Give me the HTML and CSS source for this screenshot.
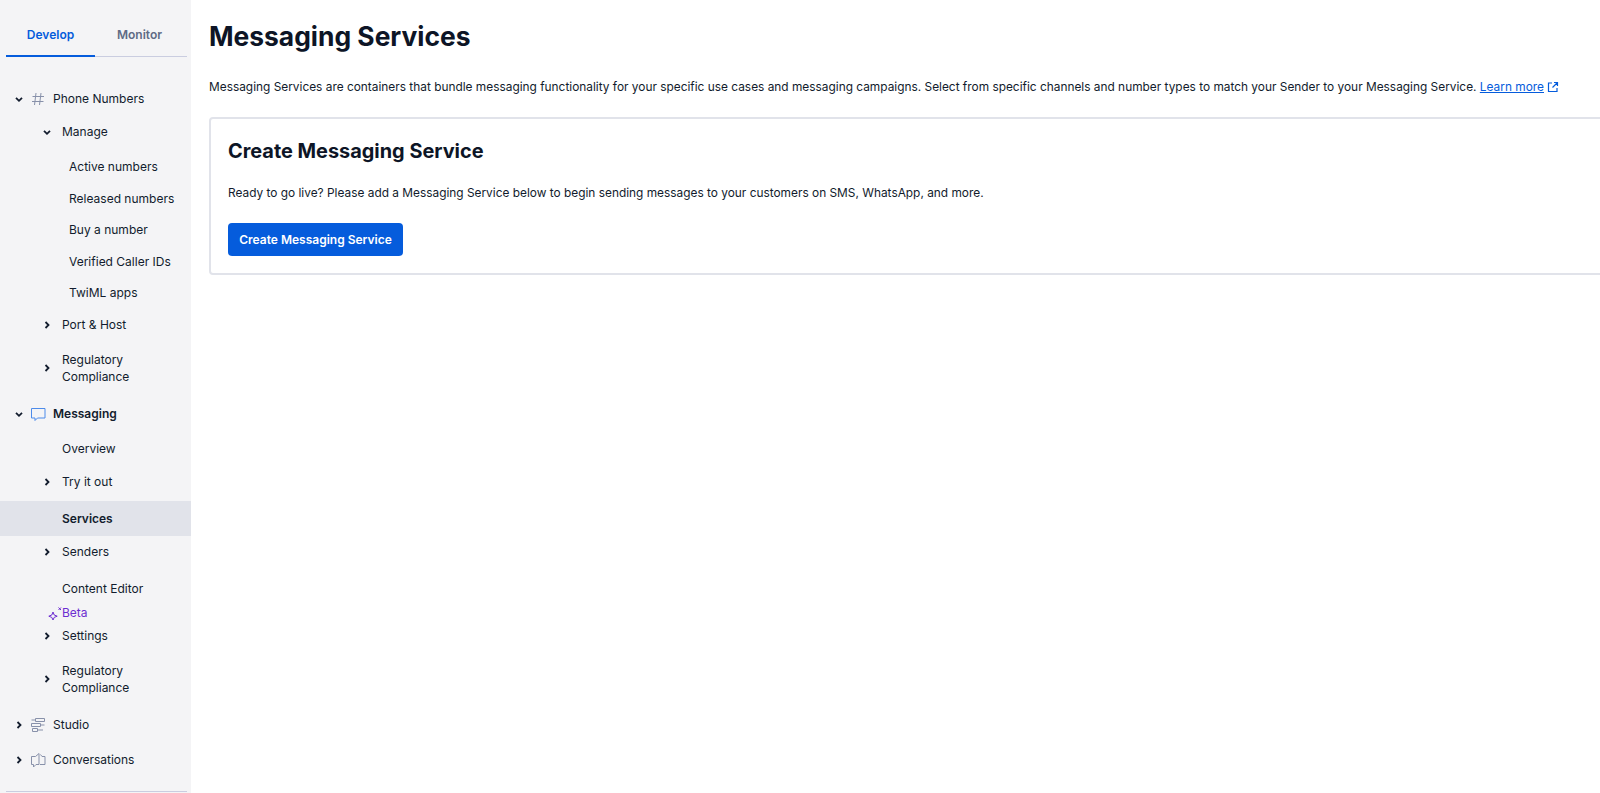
FILE: index.html
```html
<!DOCTYPE html>
<html lang="en">
  <head>
    <meta charset="UTF-8" />
    <meta name="viewport" content="width=device-width, initial-scale=1.0" />
    <title>Messaging Services</title>
    <link rel="stylesheet" href="styles.css">
  </head>
  <body>
    <aside class="sidebar">
      <div class="tabs">
        <span class="tab tab-active">Develop</span>
        <span class="tab">Monitor</span>
      </div>
      <nav class="nav">
        <div class="row top h34">
          <svg class="chev" viewBox="0 0 10 10"><path d="M2 3.800l3 3 3-3"/></svg>
          <svg class="icon" viewBox="0 0 16 16"><path class="gray" d="M6 2L4.500 14M11 2L9.500 14M2.500 5.500h11.500M2 10.500h11.500"/></svg>
          <span>Phone Numbers</span>
        </div>
        <div class="row sub h33 nudge-up">
          <svg class="chev" viewBox="0 0 10 10"><path d="M2 3.800l3 3 3-3"/></svg>
          <span>Manage</span>
        </div>
        <div class="leaves">
          <div class="leaf">Active numbers</div>
          <div class="leaf">Released numbers</div>
          <div class="leaf">Buy a number</div>
          <div class="leaf">Verified Caller IDs</div>
          <div class="leaf">TwiML apps</div>
        </div>
        <div class="row sub h32">
          <svg class="chev" viewBox="0 0 10 10"><path d="M3.500 2l3 3-3 3"/></svg>
          <span>Port &amp; Host</span>
        </div>
        <div class="row sub h55">
          <svg class="chev" viewBox="0 0 10 10"><path d="M3.500 2l3 3-3 3"/></svg>
          <span>Regulatory<br>Compliance</span>
        </div>
        <div class="row top h35 strong nudge-down">
          <svg class="chev" viewBox="0 0 10 10"><path d="M2 3.800l3 3 3-3"/></svg>
          <svg class="icon" viewBox="0 0 16 16"><path class="blue" d="M1.500 2.500h13.500v9.500H7.500L5 14.500v-2.500H1.500z"/></svg>
          <span>Messaging</span>
        </div>
        <div class="row sub h34 nudge-down"><span class="nochev">Overview</span></div>
        <div class="row sub h36 nudge-up">
          <svg class="chev" viewBox="0 0 10 10"><path d="M3.500 2l3 3-3 3"/></svg>
          <span>Try it out</span>
        </div>
        <div class="row sub h35 current nudge-down"><span class="nochev">Services</span></div>
        <div class="row sub h32">
          <svg class="chev" viewBox="0 0 10 10"><path d="M3.500 2l3 3-3 3"/></svg>
          <span>Senders</span>
        </div>
        <div class="row sub h39 editor"><span class="nochev">Content Editor</span></div>
        <div class="beta">
          <svg class="sparkle" viewBox="0 0 14 14"><path d="M5 6l1.200 3 3 1.200-3 1.200L5 14l-1.200-2.600-3-1.200 3-1.200zM10.500 1.500l2.500 2.500M13 1.500L10.500 4"/></svg>
          <span>Beta</span>
        </div>
        <div class="row sub h33 nudge-down">
          <svg class="chev" viewBox="0 0 10 10"><path d="M3.500 2l3 3-3 3"/></svg>
          <span>Settings</span>
        </div>
        <div class="row sub h55">
          <svg class="chev" viewBox="0 0 10 10"><path d="M3.500 2l3 3-3 3"/></svg>
          <span>Regulatory<br>Compliance</span>
        </div>
        <div class="row top h36">
          <svg class="chev" viewBox="0 0 10 10"><path d="M3.500 2l3 3-3 3"/></svg>
          <svg class="icon" viewBox="0 0 16 16"><path class="gray" d="M5.500 1.500h9v3h-9zM1.500 6.500h9v3h-9zM2.500 11.500h5v3h-5zM1.500 3h4M10.500 8H14.500M7.500 13H13"/></svg>
          <span>Studio</span>
        </div>
        <div class="row top h35">
          <svg class="chev" viewBox="0 0 10 10"><path d="M3.500 2l3 3-3 3"/></svg>
          <svg class="icon" viewBox="0 0 16 16"><path class="gray" d="M1.500 4.500h4l3.500-3v11H6L3.500 15v-2.500h-2zM10.500 2.500l1.500 2h3v8h-5"/></svg>
          <span>Conversations</span>
        </div>
      </nav>
      <div class="sidebar-end"></div>
    </aside>
    <main class="main">
      <h1 class="title">Messaging Services</h1>
      <p class="intro">
        Messaging Services are containers that bundle messaging functionality for your specific use cases and messaging campaigns. Select from specific channels and number types to match your Sender to your Messaging Service.
        <a class="link" href="#">Learn more</a>
        <svg class="ext" viewBox="0 0 12 12"><path d="M5 2H1.500v8.500H10V7M7 1.500h3.500V5M10.500 1.500L5.500 6.500"/></svg>
      </p>
      <section class="card">
        <h2 class="card-title">Create Messaging Service</h2>
        <p class="card-text">Ready to go live? Please add a Messaging Service below to begin sending messages to your customers on SMS, WhatsApp, and more.</p>
        <button class="btn">Create Messaging Service</button>
      </section>
    </main>
  </body>
</html>
```

FILE: styles.css
```css
* {
  margin: 0;
  padding: 0;
  box-sizing: border-box;
}
body {
  display: flex;
  height: 793px;
  overflow: hidden;
  background: #fff;
  color: #121c2d;
  font-family: Inter, "Liberation Sans", sans-serif;
  font-size: 12px;
}

/* sidebar */
.sidebar {
  width: 191px;
  flex-shrink: 0;
  height: 100%;
  background: #f4f4f6;
  padding-top: 6px;
}
.tabs {
  display: flex;
  margin: 0 4px 0 6px;
  height: 51px;
  border-bottom: 1px solid #cacde0;
}
.tab {
  flex: 0 0 89px;
  display: flex;
  align-items: center;
  justify-content: center;
  padding-top: 7px;
  font-weight: 600;
  color: #606b85;
}
.tab-active {
  color: #055cdc;
  border-bottom: 2px solid #055cdc;
  margin-bottom: -1px;
}
.nav {
  margin-top: 25px;
}
.row {
  display: flex;
  align-items: center;
  line-height: 17.500px;
}
.top {
  padding-left: 14px;
}
.sub {
  padding-left: 42px;
}
.h32 { height: 32px; }
.h33 { height: 33px; }
.h34 { height: 34px; }
.h35 { height: 35px; }
.h36 { height: 36px; }
.h39 { height: 39px; }
.h55 { height: 55px; }
.nudge-down { padding-top: 2px; }
.nudge-up { padding-bottom: 2px; }
.editor { padding-top: 4px; }
.strong { font-weight: 600; }
.current {
  background: #e1e3ea;
  font-weight: 600;
}
.chev {
  width: 10px;
  height: 10px;
  margin-right: 10px;
  flex-shrink: 0;
}
.chev path {
  fill: none;
  stroke: #121c2d;
  stroke-width: 1.800;
}
.top .chev {
  margin-right: 6px;
}
.nochev {
  margin-left: 20px;
}
.icon {
  width: 16px;
  height: 16px;
  margin-right: 7px;
  flex-shrink: 0;
}
.icon path {
  fill: none;
  stroke-width: 1;
}
.icon .gray { stroke: #8891aa; }
.icon .blue { stroke: #4d8bea; }
.leaves {
  margin-top: 2px;
}
.leaf {
  height: 31.500px;
  padding-left: 69px;
  display: flex;
  align-items: center;
}
.beta {
  display: flex;
  align-items: center;
  height: 12px;
  padding-left: 48px;
  color: #6d2ed1;
}
.sparkle {
  width: 14px;
  height: 14px;
  flex-shrink: 0;
}
.sparkle path {
  fill: none;
  stroke: #6d2ed1;
  stroke-width: 1;
}
.sidebar-end {
  margin: 13px 4px 0 6px;
  border-top: 1px solid #cacde0;
}

/* main */
.main {
  flex: 1;
  min-width: 0;
  padding: 20px 0 0 18px;
}
.title {
  font-size: 26.400px;
  line-height: 32px;
  font-weight: 700;
  color: #0d1526;
}
.intro {
  margin-top: 25px;
  line-height: 20px;
  font-size: 11.880px;
  white-space: nowrap;
}
.link {
  color: #055cdc;
}
.ext {
  width: 12px;
  height: 12px;
  vertical-align: -2px;
}
.ext path {
  fill: none;
  stroke: #055cdc;
  stroke-width: 1.200;
}
.card {
  margin: 20px -10px 0 0;
  height: 158px;
  border: 2px solid #e1e3ea;
  border-radius: 4px;
  padding: 18px 16px 0 17px;
}
.card-title {
  font-size: 19.900px;
  line-height: 28px;
  font-weight: 700;
  color: #0d1526;
}
.card-text {
  margin-top: 18px;
  line-height: 20px;
  font-size: 11.880px;
}
.btn {
  display: block;
  margin-top: 20px;
  width: 175px;
  height: 33px;
  border: 0;
  border-radius: 4px;
  background: #055cdc;
  color: #fff;
  font-family: inherit;
  font-size: 12px;
  font-weight: 600;
}
```
